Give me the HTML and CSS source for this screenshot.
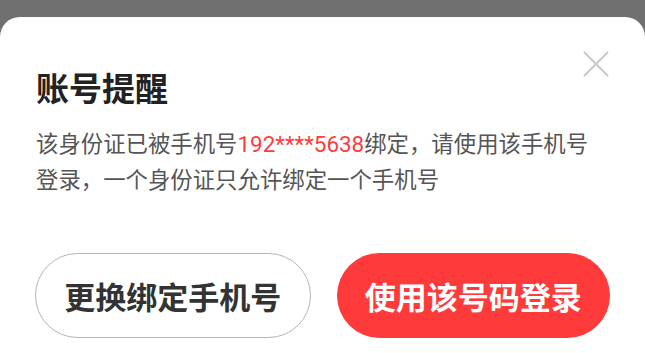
FILE: index.html
```html
<!DOCTYPE html>
<html lang="zh-CN">
<head>
<meta charset="utf-8">
<title>账号提醒</title>
<link rel="stylesheet" href="styles.css">
</head>
<body>
<div class="sheet">
  <button class="close" aria-label="关闭">
    <svg width="26" height="26" viewBox="0 0 26 26"><path d="M1 1 L25 25 M25 1 L1 25" stroke="#c9c9c9" stroke-width="2" fill="none"/></svg>
  </button>
  <h1 class="title">账号提醒</h1>
  <p class="desc">该身份证已被手机号<span class="phone">192****5638</span>绑定，请使用该手机号登录，一个身份证只允许绑定一个手机号</p>
  <div class="actions">
    <button class="btn btn-outline">更换绑定手机号</button>
    <button class="btn btn-primary">使用该号码登录</button>
  </div>
</div>
</body>
</html>
```
FILE: styles.css
```css
html, body {
  margin: 0;
  padding: 0;
  background: #707070;
  height: 100%;
  overflow: hidden;
}
body {
  font-family: "Noto Sans CJK SC", "Noto Sans", sans-serif;
}
.sheet {
  position: relative;
  margin-top: 17px;
  background: #ffffff;
  border-radius: 20px 20px 0 0;
  height: 336px;
  box-sizing: border-box;
  padding: 50px 30px 0 36px;
}
.close {
  position: absolute;
  top: 34px;
  right: 36px;
  width: 26px;
  height: 26px;
  padding: 0;
  border: 0;
  background: none;
  display: block;
}
.close svg { display: block; }
.title {
  margin: 0;
  font-size: 33px;
  line-height: 40px;
  font-weight: 700;
  color: #222222;
}
.desc {
  margin: 19px 17px 0 0;
  font-size: 22.4px;
  line-height: 36px;
  color: #555555;
  font-family: "Roboto", "Noto Sans CJK SC", sans-serif;
}
.phone { color: #ff3b3b; }
.actions {
  margin-top: 55px;
  margin-left: -1px;
  margin-right: 5px;
  display: flex;
  gap: 26px;
}
.btn {
  flex: 1;
  height: 85px;
  border-radius: 43px;
  font-family: inherit;
  font-size: 31px;
  font-weight: 700;
  padding: 0;
  box-sizing: border-box;
}
.btn-outline {
  background: #ffffff;
  border: 1px solid #b5b5b5;
  color: #333333;
}
.btn-primary {
  background: #ff3a3a;
  border: 0;
  color: #ffffff;
}
```
